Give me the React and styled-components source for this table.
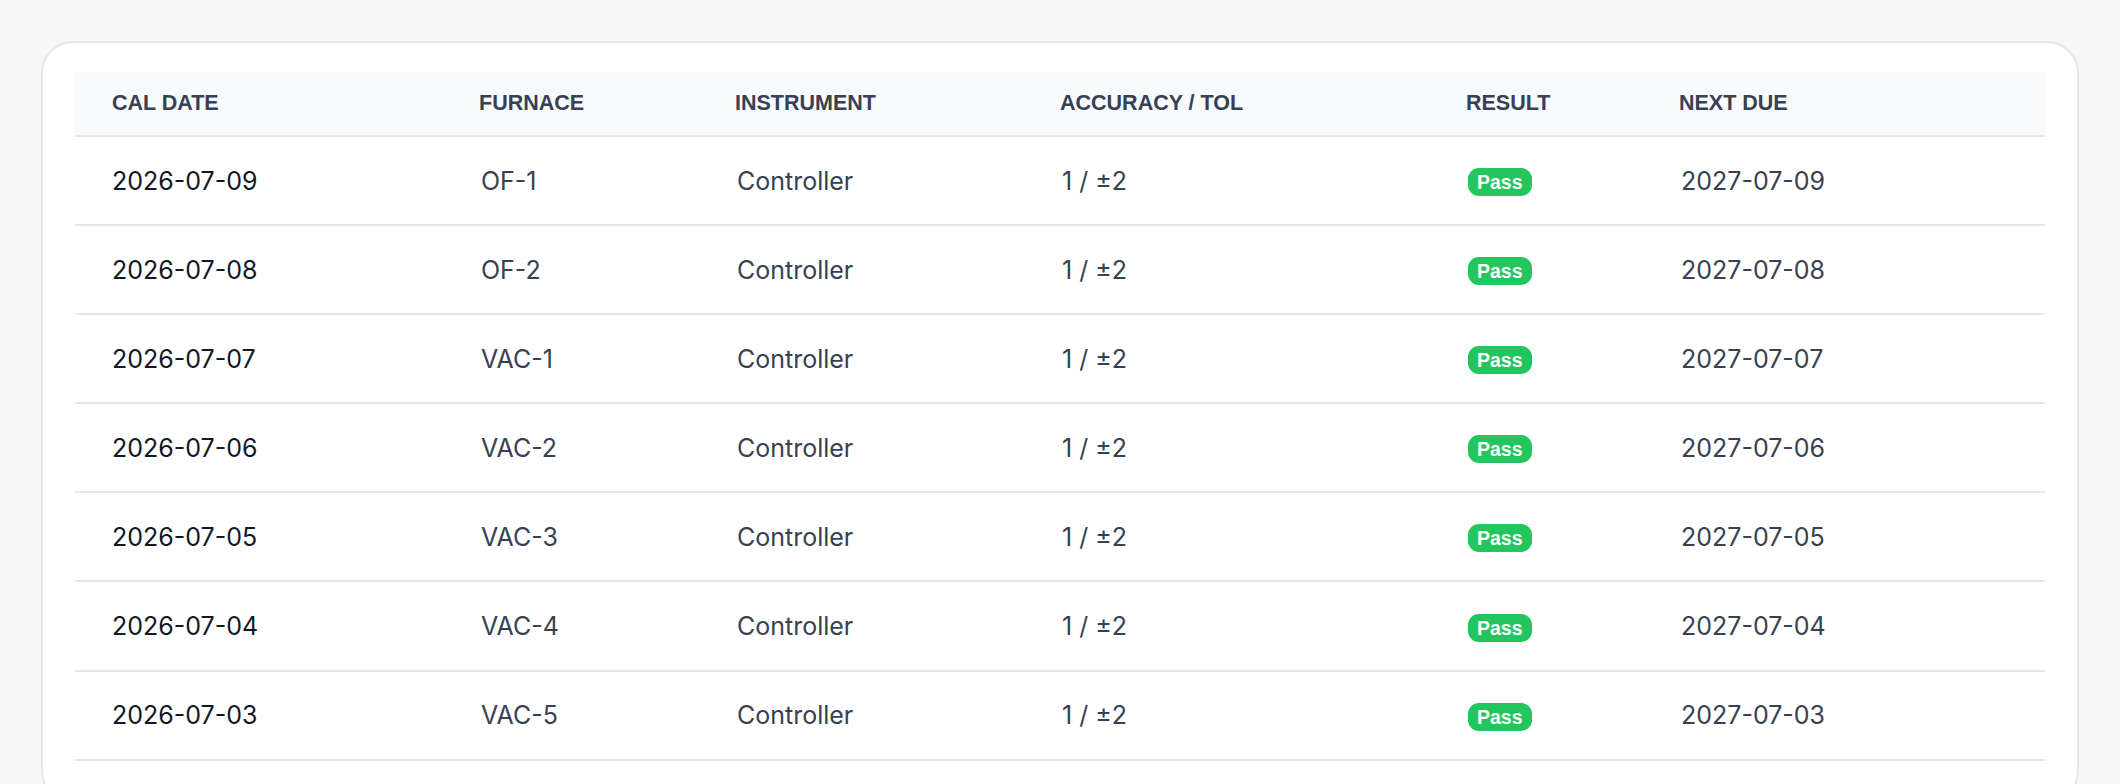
import React from 'react'
import styled, { createGlobalStyle } from 'styled-components'

const GlobalStyle = createGlobalStyle`
    html, body {
        margin: 0;
        padding: 0;
        background: #f7f7f7;
        font-family: Inter, "Liberation Sans", Arial, sans-serif;
    }
    * {
        box-sizing: border-box;
    }
`

const columns = '367px 256px 325px 406px 213px 1fr'

const calibrations = [
    { date: '2026-07-09', furnace: 'OF-1', due: '2027-07-09' },
    { date: '2026-07-08', furnace: 'OF-2', due: '2027-07-08' },
    { date: '2026-07-07', furnace: 'VAC-1', due: '2027-07-07' },
    { date: '2026-07-06', furnace: 'VAC-2', due: '2027-07-06' },
    { date: '2026-07-05', furnace: 'VAC-3', due: '2027-07-05' },
    { date: '2026-07-04', furnace: 'VAC-4', due: '2027-07-04' },
    { date: '2026-07-03', furnace: 'VAC-5', due: '2027-07-03' },
]

export default function App() {
    return (
        <>
            <GlobalStyle />
            <Page>
                <Card>
                    <Table>
                        <HeadRow>
                            <HeadCell>Cal Date</HeadCell>
                            <HeadCell>Furnace</HeadCell>
                            <HeadCell>Instrument</HeadCell>
                            <HeadCell>Accuracy / Tol</HeadCell>
                            <HeadCell>Result</HeadCell>
                            <HeadCell>Next Due</HeadCell>
                        </HeadRow>
                        {calibrations.map(row => (
                            <Row key={row.date}>
                                <Cell strong>{row.date}</Cell>
                                <Cell>{row.furnace}</Cell>
                                <Cell>Controller</Cell>
                                <Cell>1 / ±2</Cell>
                                <Cell>
                                    <Badge>Pass</Badge>
                                </Cell>
                                <Cell>{row.due}</Cell>
                            </Row>
                        ))}
                    </Table>
                </Card>
            </Page>
        </>
    )
}

const Page = styled.div`
    padding: 41px 41px 0;
`

const Card = styled.div`
    background: #ffffff;
    border: 2px solid #e6e6e6;
    border-radius: 32px;
    padding: 29px 32px 40px;
`

const Table = styled.div`
    display: flex;
    flex-direction: column;
`

const HeadRow = styled.div`
    display: grid;
    grid-template-columns: ${columns};
    align-items: center;
    height: 65px;
    background: #f8fafc;
    border-bottom: 2px solid #e5e7eb;
`

const HeadCell = styled.div`
    padding-left: 37px;
    font-family: "Liberation Sans", Arial, sans-serif;
    font-size: 21.5px;
    font-weight: 700;
    text-transform: uppercase;
    color: #374151;
`

const Row = styled.div`
    display: grid;
    grid-template-columns: ${columns};
    align-items: center;
    height: 89.1px;
    border-bottom: 2px solid #e5e7eb;
`

const Cell = styled.div`
    padding-left: ${p => (p.strong ? '37px' : '39px')};
    font-size: 25px;
    color: ${p => (p.strong ? '#111827' : '#374151')};
`

const Badge = styled.span`
    display: inline-block;
    height: 28px;
    line-height: 28px;
    padding: 0 9px;
    margin-top: 3px;
    border-radius: 11px;
    background: #22c55e;
    color: #ffffff;
    font-family: "Liberation Sans", Arial, sans-serif;
    font-size: 19.5px;
    font-weight: 700;
`
